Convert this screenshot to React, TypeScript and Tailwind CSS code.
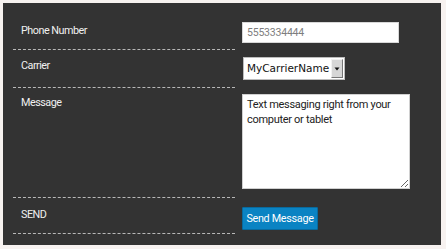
import React from "react";

const sans = { fontFamily: "Roboto, 'Noto Sans', sans-serif" };

export default function App() {
  return (
    <div className="w-[446px] h-[249px] bg-[#f7f2f0] pt-[3px] pl-[3px]" style={sans}>
      <div className="w-[438px] h-[242px] bg-[#333333] pl-[10px] pt-[12px]">
        <div className="grid grid-cols-[222px_168px] gap-x-[7px]">
          {/* Row 1 */}
          <div className="h-[35px] border-b border-dashed border-[#b8b8b8] pl-[8px] pt-[9px] text-[10.8px] leading-[14px] tracking-[-0.5px] text-[#f0f0f0]">
            Phone Number
          </div>
          <div className="pt-[7px]">
            <div className="w-[157px] h-[21px] bg-white border border-[#d8d8d8] pl-[4px] text-[10.5px] leading-[19px] text-[#7e7e7e] tracking-[-0.2px]">
              5553334444
            </div>
          </div>

          {/* Row 2 */}
          <div className="h-[38px] border-b border-dashed border-[#b8b8b8] pl-[8px] pt-[9px] text-[10.8px] leading-[14px] tracking-[-0.5px] text-[#f0f0f0]">
            Carrier
          </div>
          <div className="pt-[7px] pl-[1px]">
            <div className="flex w-[102px] h-[23px] bg-white border border-[#bdbdbd] items-stretch">
              <div
                className="flex-1 pl-[3px] text-[10.5px] leading-[21px] text-[#111] whitespace-nowrap overflow-hidden"
                style={{ fontFamily: "'DejaVu Sans', sans-serif" }}
              >
                MyCarrierName
              </div>
              <div className="w-[12px] my-[1px] mr-[1px] bg-[#d6d6d6] border-r border-b border-[#777] border-l border-t border-l-[#f2f2f2] border-t-[#f2f2f2] flex items-center justify-center">
                <svg width="6" height="4" viewBox="0 0 6 4">
                  <path d="M0.5 0.5 L5.5 0.5 L3 3.5 Z" fill="#111" />
                </svg>
              </div>
            </div>
          </div>

          {/* Row 3 */}
          <div className="h-[110px] border-b border-dashed border-[#b8b8b8] pl-[8px] pt-[8px] text-[10.8px] leading-[14px] tracking-[-0.5px] text-[#f0f0f0]">
            Message
          </div>
          <div className="pt-[6px]">
            <textarea
              className="block w-[168px] h-[95px] bg-white border border-[#d0d0d0] px-[4px] pt-[2px] text-[11px] leading-[15px] tracking-[-0.3px] text-[#222] outline-none"
              style={sans}
              defaultValue="Text messaging right from your computer or tablet"
            />
          </div>

          {/* Row 4 */}
          <div className="h-[36px] border-b border-dashed border-[#b8b8b8] pl-[8px] pt-[10px] text-[10.8px] leading-[14px] tracking-[-0.5px] text-[#f0f0f0]">
            SEND
          </div>
          <div className="pt-[7px]">
            <button className="w-[76px] h-[23px] bg-[#0a83c3] border border-[#086a9e] rounded-[1px] text-white text-[10.8px] leading-[21px] tracking-[-0.3px]">
              Send Message
            </button>
          </div>
        </div>
      </div>
    </div>
  );
}
